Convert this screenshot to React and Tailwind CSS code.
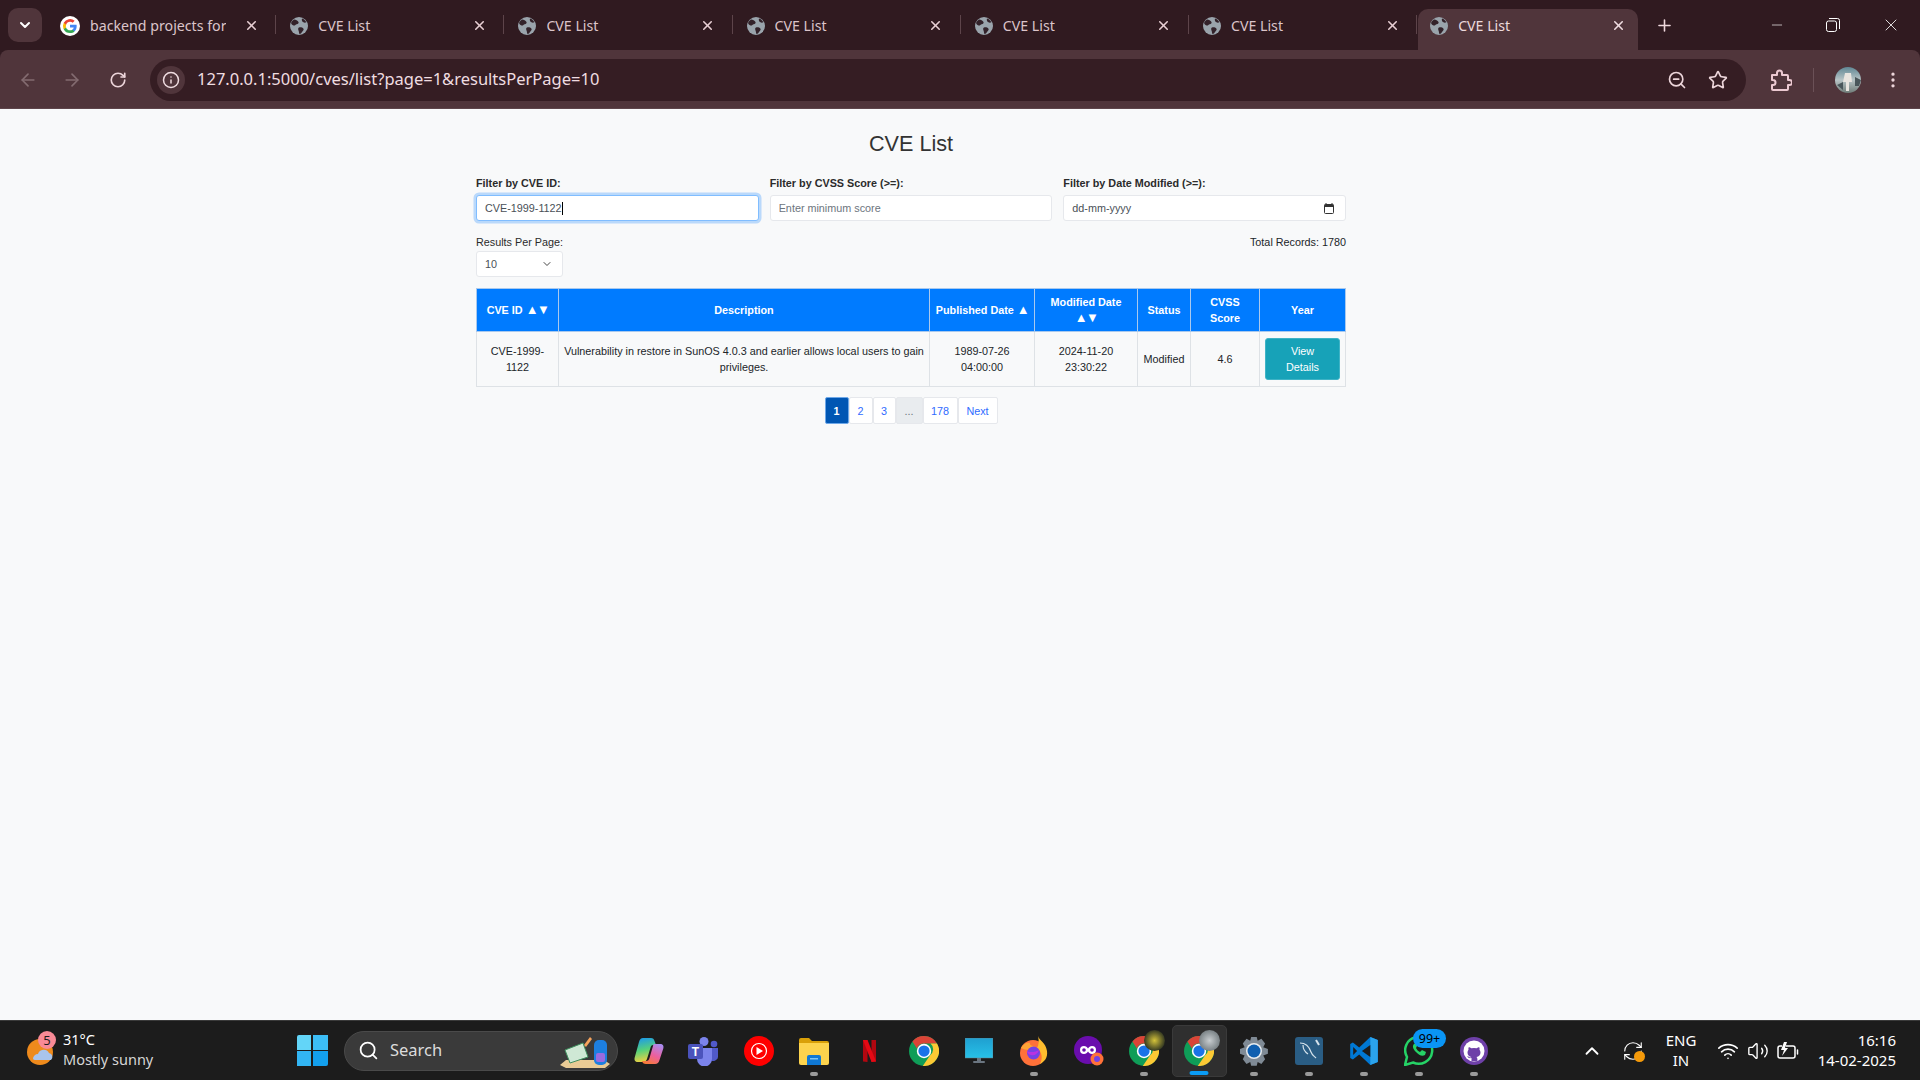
import { ArrowLeft, ArrowRight, RotateCw, Info, ZoomOut, Star, EllipsisVertical, Plus, X, Minus, ChevronDown, ChevronUp, Search, Wifi, Volume2, RefreshCw } from 'lucide-react';

function Globe() {
  return (
    <svg width="18" height="18" viewBox="0 0 18 18" className="shrink-0">
      <circle cx="9" cy="9" r="9" fill="#9aa4ac" />
      <path d="M4 2.500c2 .3 3.500 1 4.500 2.500.5 1-.5 2-1.800 2.200C5.500 7.500 5 9 3.500 8.500 2 8 1.500 7 1 6c.6-1.500 1.800-2.800 3-3.500zM9 10.500c1.500-.5 3.500 0 4.500 1.200.6 1-.5 2-1.300 3-.6 1-1.500 2-2.500 2.500-.8-1-.7-2.200-1-3.200-.5-1.500-1-3 .3-3.500zM12 1.500c2 .6 3.500 2 4.300 3.800-1 .6-2.300.4-3.300-.3-1-.6-1.500-2.200-1-3.500z" fill="#33222a" />
    </svg>
  );
}

function ChromeIcon({ size = 30 }) {
  return (
    <svg width={size} height={size} viewBox="0 0 48 48" className="shrink-0">
      <circle cx="24" cy="24" r="24" fill="#0f9d58" />
      <path d="M24 0a24 24 0 0 1 20.800 12H24a12 12 0 0 0-11.300 7.900L5.500 8.700A24 24 0 0 1 24 0z" fill="#db4437" />
      <path d="M44.800 12A24 24 0 0 1 22 47.900L33.500 31A12 12 0 0 0 34.400 12z" fill="#fcc934" />
      <circle cx="24" cy="24" r="11.500" fill="#fff" />
      <circle cx="24" cy="24" r="9" fill="#1a73e8" />
    </svg>
  );
}

function GoogleIcon() {
  return (
    <svg width="20" height="20" viewBox="0 0 48 48" className="shrink-0 -ml-[2px]">
      <circle cx="24" cy="24" r="24" fill="#fff" />
      <path d="M40 24.500c0-1.200-.1-2.300-.3-3.400H24v6.400h9a7.700 7.700 0 0 1-3.300 5v4.200h5.400c3.100-2.900 4.900-7.100 4.900-12.200z" fill="#4285f4" />
      <path d="M24 41c4.500 0 8.300-1.500 11.100-4.100l-5.400-4.200c-1.500 1-3.400 1.600-5.700 1.600-4.400 0-8.100-3-9.400-6.900H9v4.300A17 17 0 0 0 24 41z" fill="#34a853" />
      <path d="M14.600 27.400a10 10 0 0 1 0-6.700v-4.300H9a17 17 0 0 0 0 15.300z" fill="#fbbc05" />
      <path d="M24 13.700c2.500 0 4.700.9 6.400 2.500l4.800-4.800A17 17 0 0 0 9 16.400l5.600 4.300c1.300-4 5-7 9.400-7z" fill="#ea4335" />
    </svg>
  );
}

function Tab({ icon, title, narrow }) {
  return (
    <div className="w-[228.200px] h-[41px] flex items-center relative shrink-0 pl-[15px] pr-[16.500px] pb-[8px]">
      {icon}
      <span className={`ml-[10px] text-[14.200px] text-[#dcc5ca] whitespace-nowrap overflow-hidden ${narrow ? 'w-[136px] mr-auto' : 'flex-1'}`}>{title}</span>
      <X size={15} strokeWidth={2.5} className="text-[#e8cfd4]" />
      <div className="absolute -right-[1px] top-[6px] h-[19px] w-px bg-[#5d444a]" />
    </div>
  );
}

function Field({ label, children }) {
  return (
    <div className="flex-1">
      <div className="font-bold h-[16px] mb-[4px] text-[#2b2b2b]">{label}</div>
      {children}
    </div>
  );
}

function Arrows({ children }) {
  return <span className="text-[13px] leading-[0] tracking-[-1.500px]">{children}</span>;
}

const thClass = 'bg-[#007bff] border border-[#a9c9ee] font-bold text-white text-center align-middle px-[5px]';
const tdClass = 'border border-[#dee2e6] text-center align-middle px-[5px] text-[#212529]';

function PageBtn({ children, className }) {
  return (
    <div className={`h-[27px] flex items-center justify-center border rounded-[2px] ${className}`}>{children}</div>
  );
}

function Slot({ children, dot, active }) {
  return (
    <div className={`w-[55px] h-[52px] flex items-center justify-center relative rounded-[5px] shrink-0 ${active ? 'bg-[#2f2f2f] border border-[#3a3a3a]' : ''}`}>
      {children}
      {dot && <div className="absolute bottom-[1px] left-1/2 -translate-x-1/2 w-[8px] h-[4px] rounded-full bg-[#9a9a9a]" />}
      {active && <div className="absolute bottom-[1px] left-1/2 -translate-x-1/2 w-[19px] h-[4px] rounded-full bg-[#0a9cf5]" />}
    </div>
  );
}

export default function App() {
  return (
    <div className="w-[1920px] h-[1080px] flex flex-col bg-[#f8f9fa] overflow-hidden font-['Liberation_Sans',Arial,sans-serif]">
      {/* Browser chrome */}
      <div className="bg-[#301a20] shrink-0 font-['Noto_Sans',sans-serif]">
        <div className="h-[50px] flex items-end">
          <div className="self-start mt-[8px] ml-[8px] mr-[5px] w-[34px] h-[34px] rounded-[10px] bg-[#50353b] flex items-center justify-center text-white">
            <ChevronDown size={16} strokeWidth={3} />
          </div>
          <Tab icon={<GoogleIcon />} title="backend projects for" narrow />
          <Tab icon={<Globe />} title="CVE List" />
          <Tab icon={<Globe />} title="CVE List" />
          <Tab icon={<Globe />} title="CVE List" />
          <Tab icon={<Globe />} title="CVE List" />
          <Tab icon={<Globe />} title="CVE List" />
          <div className="w-[220px] h-[41px] ml-[2px] bg-[#50353b] rounded-t-[10px] flex items-center pl-[12px] pr-[12px] pb-[8px] shrink-0">
            <Globe />
            <span className="ml-[10px] text-[14.200px] text-[#ecdadd] flex-1">CVE List</span>
            <X size={15} strokeWidth={2.5} className="text-[#f0dde1]" />
          </div>
          <div className="h-[41px] flex items-center ml-[17px] pb-[8px] text-[#f0d9de]">
            <Plus size={19} strokeWidth={2} />
          </div>
          <div className="h-[50px] flex items-center ml-auto text-white">
            <div className="w-[46px] flex justify-center"><Minus size={16} strokeWidth={1} /></div>
            <div className="w-[66px] flex justify-center">
              <svg width="14" height="14" viewBox="0 0 14 14" fill="none" stroke="currentColor">
                <rect x="0.500" y="3" width="10" height="10.500" rx="2" />
                <path d="M3 .500h8.500a2 2 0 0 1 2 2V11" />
              </svg>
            </div>
            <div className="w-[54px] pr-[4px] flex justify-center"><X size={20} strokeWidth={1} /></div>
          </div>
        </div>

        <div className="h-[59px] bg-[#50353b] flex items-center pt-[1px] rounded-t-[8px] border-b border-[#5e454b]">
          <div className="w-[150px] flex items-center shrink-0 pl-[18px]">
            <ArrowLeft size={20} className="text-[#836b70]" />
            <ArrowRight size={20} className="ml-[24px] text-[#836b70]" />
            <RotateCw size={18} strokeWidth={2.2} className="ml-[27px] text-[#ecd5da]" />
          </div>
          <div className="w-[1596px] h-[42px] rounded-full bg-[#351d23] flex items-center pl-[7px] pr-[18px] shrink-0">
            <div className="w-[28px] h-[28px] rounded-full bg-[#50353b] flex items-center justify-center">
              <Info size={18} className="text-[#f0dde1]" />
            </div>
            <span className="ml-[12px] text-[16.500px] text-[#f0dde1] whitespace-nowrap">127.0.0.1:5000/cves/list?page=1&resultsPerPage=10</span>
            <div className="ml-auto flex items-center gap-[21px] text-[#ecd5da]">
              <ZoomOut size={20} />
              <Star size={20} />
            </div>
          </div>
          <div className="flex items-center text-[#ecc9d1] ml-[24px]">
            <svg width="22" height="22" viewBox="0 0 22 22" fill="none" stroke="currentColor" strokeWidth="2" strokeLinejoin="round">
              <path d="M2 6h5V4a2.500 2.500 0 0 1 5 0v2h5a1 1 0 0 1 1 1v4h1.500a2.500 2.500 0 0 1 0 5H18v4a1 1 0 0 1-1 1H3a1 1 0 0 1-1-1v-4h1a2.500 2.500 0 0 0 0-5H2z" />
            </svg>
            <div className="w-px h-[24px] bg-[#6b5157] ml-[21px] mr-[21px]" />
            <svg width="26" height="30" viewBox="0 0 26 30" className="shrink-0">
              <defs>
                <linearGradient id="avatar" x1="0" y1="0" x2="0" y2="1">
                  <stop offset="0" stopColor="#5f8794" />
                  <stop offset="0.500" stopColor="#b8c4c6" />
                  <stop offset="1" stopColor="#6f7c78" />
                </linearGradient>
              </defs>
              <ellipse cx="13" cy="15" rx="13" ry="13" fill="url(#avatar)" />
              <path d="M10 8h6l1 9h-3v9h-3v-9H8z" fill="#e8e4df" />
              <path d="M2 20l6-3v8zM20 12l6 3-2 6h-4z" fill="#49565a" />
            </svg>
            <EllipsisVertical size={20} className="ml-[22px] text-[#ecd5da]" />
          </div>
        </div>
      </div>

      {/* Page */}
      <main className="flex-1 ml-[476px] w-[870px] text-[10.800px] leading-[16px] text-[#212529]">
        <h1 className="text-[21.600px] leading-[26px] text-center text-[#333] mt-[22px] mb-[18px]">CVE List</h1>

        <div className="flex gap-[11px]">
          <Field label="Filter by CVE ID:">
            <div className="h-[26px] bg-white border border-[#80bdff] rounded-[3px] shadow-[0_0_0_2.500px_rgba(0,123,255,0.25)] flex items-center pl-[8px] text-[#495057]">
              CVE-1999-1122
              <span className="w-px h-[13px] bg-black" />
            </div>
          </Field>
          <Field label="Filter by CVSS Score (>=):">
            <input
              placeholder="Enter minimum score"
              className="w-full h-[26px] bg-white border border-[#e6e8ec] rounded-[3px] px-[8px] placeholder:text-[#6c757d] outline-none"
            />
          </Field>
          <Field label="Filter by Date Modified (>=):">
            <div className="h-[26px] bg-white border border-[#e6e8ec] rounded-[3px] flex items-center justify-between pl-[8px] pr-[11px] text-[#495057]">
              dd-mm-yyyy
              <svg width="10" height="11" viewBox="0 0 10 11">
                <path d="M2 0v1.500M8 0v1.500" stroke="#333" />
                <rect x="0.500" y="1.500" width="9" height="9" rx="1" fill="none" stroke="#333" />
                <rect x="0.500" y="1.500" width="9" height="2.500" fill="#333" />
              </svg>
            </div>
          </Field>
        </div>

        <div className="flex justify-between mt-[13px]">
          <div>
            <div className="h-[16px] mb-[1px] text-[#2b2b2b]">Results Per Page:</div>
            <div className="w-[87px] h-[26px] bg-white border border-[#e6e8ec] rounded-[3px] flex items-center justify-between pl-[8px] pr-[9px] text-[#495057]">
              10
              <ChevronDown size={12} strokeWidth={2} className="text-[#444]" />
            </div>
          </div>
          <div>Total Records: 1780</div>
        </div>

        <table className="w-[870px] table-fixed border-collapse mt-[11px]">
          <thead>
            <tr className="h-[43px]">
              <th className={`${thClass} w-[82px]`}>CVE ID <Arrows>▲▼</Arrows></th>
              <th className={`${thClass} w-[371px]`}>Description</th>
              <th className={`${thClass} w-[105px] !px-[2px]`}>Published Date <Arrows>▲</Arrows></th>
              <th className={`${thClass} w-[103px]`}>Modified Date <Arrows>▲▼</Arrows></th>
              <th className={`${thClass} w-[53px]`}>Status</th>
              <th className={`${thClass} w-[69px]`}>CVSS Score</th>
              <th className={thClass}>Year</th>
            </tr>
          </thead>
          <tbody>
            <tr className="h-[55px]">
              <td className={tdClass}>CVE-1999-1122</td>
              <td className={tdClass}>Vulnerability in restore in SunOS 4.0.3 and earlier allows local users to gain privileges.</td>
              <td className={tdClass}>1989-07-26 04:00:00</td>
              <td className={tdClass}>2024-11-20 23:30:22</td>
              <td className={`${tdClass} !px-0`}>Modified</td>
              <td className={tdClass}>4.6</td>
              <td className={tdClass}>
                <div className="h-[42px] rounded-[3px] bg-[#17a2b8] border border-[#3fb3c6] text-white flex items-center justify-center text-center px-[14px]">View Details</div>
              </td>
            </tr>
          </tbody>
        </table>

        <div className="flex justify-center mt-[10px] text-[#2f6bff]">
          <PageBtn className="w-[24px] bg-[#0056b3] border-[#6ea8e8] text-white font-bold">1</PageBtn>
          <PageBtn className="w-[24px] bg-white border-[#e6e8ec]">2</PageBtn>
          <PageBtn className="w-[23px] bg-white border-[#e6e8ec]">3</PageBtn>
          <PageBtn className="w-[27px] bg-[#e9ecef] border-[#e6e8ec] text-[#6c757d]">...</PageBtn>
          <PageBtn className="w-[35px] bg-white border-[#e6e8ec]">178</PageBtn>
          <PageBtn className="w-[40px] bg-white border-[#e6e8ec]">Next</PageBtn>
        </div>
      </main>

      {/* Windows taskbar */}
      <div className="h-[60px] bg-[#1c1c1c] border-t border-[#3a3a3a] flex items-center shrink-0 font-['Noto_Sans',sans-serif] text-white">
        <div className="w-[284px] flex items-center shrink-0 pl-[27px]">
          <div className="relative w-[30px] h-[34px] shrink-0">
            <svg width="30" height="34" viewBox="0 0 30 34">
              <circle cx="13" cy="18" r="13" fill="#ee8a1c" />
              <path d="M6 25a5 5 0 0 1 5-5 6 6 0 0 1 11-1 4 4 0 0 1 2 7H8a3 3 0 0 1-2-1z" fill="#a9c4ec" />
            </svg>
            <div className="absolute left-[11px] -top-[3px] w-[18px] h-[18px] rounded-full bg-[#f98a96] text-[#1c1c1c] text-[13px] leading-[18px] text-center">5</div>
          </div>
          <div className="ml-[6px] -mt-[3px] text-[14.500px] leading-[20px] whitespace-nowrap">
            <div>31°C</div>
            <div className="text-[#d6d6d6]">Mostly sunny</div>
          </div>
        </div>

        <div className="w-[55px] pl-[1px] flex justify-center shrink-0">
          <div className="grid grid-cols-2 gap-[1.500px] w-[31px] h-[31px]">
            <div className="bg-[#63d5f8] rounded-tl-[2px]" />
            <div className="bg-[#3cbdf5]" />
            <div className="bg-[#32b5f3]" />
            <div className="bg-[#13a0ee] rounded-br-[2px]" />
          </div>
        </div>

        <div className="w-[274px] ml-[5px] h-[40px] rounded-full bg-[#3a3a3a] border border-[#4a4a4a] flex items-center pl-[13px] relative shrink-0">
          <Search size={21} strokeWidth={2} className="text-white" />
          <span className="ml-[11px] text-[16.500px] text-[#dcdcdc]">Search</span>
          <svg width="50" height="36" viewBox="0 0 50 36" className="absolute right-[7px] top-[1px]">
            <path d="M0 32l6-5h38l6 4-5 4H6z" fill="#e9cb95" />
            <path d="M5 17l18-7 5 14-18 6z" fill="#cfe8d5" stroke="#3f8f5e" />
            <path d="M24 12l6-8 2 2-6 8z" fill="#f6a35c" />
            <rect x="34" y="7" width="13" height="25" rx="5" fill="#1d7fe0" />
            <rect x="36" y="20" width="9" height="9" rx="2" fill="#9a6be0" />
          </svg>
        </div>

        <div className="flex items-center ml-[3.500px]">
          <Slot>
            <svg width="30" height="28" viewBox="0 0 30 28">
              <defs>
                <linearGradient id="cp1" x1="0.300" y1="0" x2="0.500" y2="1">
                  <stop offset="0" stopColor="#1d9be8" />
                  <stop offset="0.500" stopColor="#56d17a" />
                  <stop offset="1" stopColor="#f4d03f" />
                </linearGradient>
                <linearGradient id="cp2" x1="0.800" y1="0" x2="0.300" y2="1">
                  <stop offset="0" stopColor="#a98cf0" />
                  <stop offset="0.550" stopColor="#ec5f9e" />
                  <stop offset="1" stopColor="#f77a3a" />
                </linearGradient>
              </defs>
              <path d="M9 1h8c2 0 3 1 3.500 3L22 8h-3c-1 0-2 .7-2.300 2L13 22c-.6 2-2 3-4 3H4c-3 0-4-2-3.300-4.500L5 5c.7-2.500 2-4 4-4z" fill="url(#cp1)" />
              <path d="M20 7h6c3 0 4 2 3.300 4.500L25.500 23c-.7 2.500-2 4-4.500 4h-9c-2.500 0-3.500-1-4-3h4c2 0 3-1 3.500-3L19 9c.2-1 .5-2 1-2z" fill="url(#cp2)" />
            </svg>
          </Slot>
          <Slot>
            <svg width="32" height="30" viewBox="0 0 32 30">
              <circle cx="16" cy="5.500" r="4.500" fill="#7b83eb" />
              <circle cx="26" cy="8" r="3.300" fill="#5059c9" />
              <path d="M22 12h8v9a5 5 0 0 1-8 3z" fill="#5059c9" />
              <path d="M9 12h15v11a7.500 7.500 0 0 1-15 0z" fill="#7b83eb" />
              <rect x="0" y="8" width="15" height="15" rx="2" fill="#4b53bc" />
              <text x="7.500" y="20" textAnchor="middle" fontSize="12" fontWeight="700" fill="#fff" fontFamily="Liberation Sans">T</text>
            </svg>
          </Slot>
          <Slot>
            <svg width="30" height="30" viewBox="0 0 30 30">
              <circle cx="15" cy="15" r="15" fill="#ff0000" />
              <circle cx="15" cy="15" r="7.500" fill="none" stroke="#fff" strokeWidth="1.200" />
              <path d="M12.500 11l6.500 4-6.500 4z" fill="#fff" />
            </svg>
          </Slot>
          <Slot dot>
            <svg width="30" height="28" viewBox="0 0 30 28">
              <path d="M0 3a2 2 0 0 1 2-2h8l3 3h15a2 2 0 0 1 2 2v4H0z" fill="#d9a008" />
              <path d="M0 6h30v20a2 2 0 0 1-2 2H2a2 2 0 0 1-2-2z" fill="#fcd34d" />
              <path d="M8 20a2 2 0 0 1 2-2h10a2 2 0 0 1 2 2v8H8z" fill="#0f78d4" />
              <rect x="11" y="21" width="8" height="1.500" fill="#7cc4f5" />
            </svg>
          </Slot>
          <Slot>
            <svg width="13" height="22" viewBox="0 0 13 22">
              <path d="M0 0h4.500v22L0 21.500z" fill="#b20710" />
              <path d="M8.500 0H13v21.500L8.500 22z" fill="#b20710" />
              <path d="M0 0h4.500l8.500 21.500L8.500 22z" fill="#e50914" />
            </svg>
          </Slot>
          <Slot><ChromeIcon /></Slot>
          <Slot>
            <svg width="28" height="26" viewBox="0 0 28 26">
              <defs>
                <linearGradient id="mon" x1="0" y1="0" x2="0" y2="1">
                  <stop offset="0" stopColor="#1f9fd0" />
                  <stop offset="1" stopColor="#27c1e8" />
                </linearGradient>
              </defs>
              <rect x="0" y="0" width="28" height="20" fill="url(#mon)" stroke="#6d7c84" strokeWidth="0.500" />
              <rect x="12" y="20" width="4" height="3" fill="#6a7580" />
              <rect x="8" y="23" width="12" height="2" rx="1" fill="#6a7580" />
            </svg>
          </Slot>
          <Slot dot>
            <svg width="30" height="30" viewBox="0 0 30 30">
              <circle cx="14" cy="17" r="13" fill="#ff7139" />
              <path d="M19 0c1 4 8 7 9 15 1 7-3 11-7 13 3-6 2-12-3-16 2-3 2-8 1-12z" fill="#ffbd2e" />
              <path d="M2 12c2-4 6-6 9-5-1 2 3 3 5 4-3 0-2 3-5 3-4 0-7-1-9-2z" fill="#ffa436" />
              <circle cx="14.500" cy="17" r="6.500" fill="#7542e5" />
              <path d="M8 15c3 2 9 1 12-1-1 4-5 6-8 5-2-.6-4-2-4-4z" fill="#b833e1" />
            </svg>
          </Slot>
          <Slot>
            <svg width="30" height="30" viewBox="0 0 30 30">
              <circle cx="14" cy="14" r="14" fill="#6a0dad" />
              <path d="M10 10a4 4 0 1 0 0 8c2 0 3-1 4-2.500 1 1.500 2 2.500 4 2.500a4 4 0 1 0 0-8c-2 0-3 1-4 2.500C13 11 12 10 10 10z" fill="#fff" />
              <circle cx="10" cy="14" r="1.800" fill="#6a0dad" />
              <circle cx="18" cy="14" r="1.800" fill="#6a0dad" />
              <circle cx="23" cy="23" r="6.500" fill="#ff7139" />
              <circle cx="23" cy="23" r="3" fill="#7542e5" />
            </svg>
          </Slot>
          <Slot dot>
            <div className="relative w-[30px] h-[30px]">
              <ChromeIcon />
              <div className="absolute -right-[6px] -top-[6px] w-[21px] h-[21px] rounded-full bg-[radial-gradient(circle,#d4c33a,#2a3020_75%)]" />
            </div>
          </Slot>
          <Slot active>
            <div className="relative w-[30px] h-[30px]">
              <ChromeIcon />
              <div className="absolute -right-[6px] -top-[6px] w-[21px] h-[21px] rounded-full bg-[radial-gradient(circle,#c8cdd0,#6f787c_80%)]" />
            </div>
          </Slot>
          <Slot dot>
            <svg width="30" height="30" viewBox="0 0 30 30">
              <path d="M12 0h6l1 4 4-2 4 5-2 4 5 2v5l-5 2 2 4-4 5-4-2-1 4h-6l-1-4-4 2-4-5 2-4-5-2v-5l5-2-2-4 4-5 4 2z" fill="#7f8a95" transform="translate(1 1) scale(0.93)" />
              <circle cx="15" cy="15" r="8" fill="#e8ecef" />
              <circle cx="15" cy="15" r="6.500" fill="#0f5fb0" />
            </svg>
          </Slot>
          <Slot dot>
            <svg width="28" height="28" viewBox="0 0 28 28">
              <rect width="28" height="28" rx="3" fill="#2a5d84" />
              <path d="M5 6c5 0 9 3 11 9 1 3 3 4 5 6M8 8c0 4 2 7 5 9" fill="none" stroke="#d5e3ec" strokeWidth="1.200" />
              <path d="M21 3l3 5" stroke="#d5e3ec" strokeWidth="2" />
            </svg>
          </Slot>
          <Slot dot>
            <svg width="30" height="30" viewBox="0 0 100 100">
              <path d="M71 3 34 38 13 22 4 27v46l9 5 21-16 37 35 25-10V13z" fill="#0078d4" />
              <path d="M71 3l25 10v74l-25 10z" fill="#2ba3ec" />
              <path d="M71 30 43 50l28 20z" fill="#1c1c1c" />
              <path d="M14 37v26l13-13z" fill="#1c1c1c" />
            </svg>
          </Slot>
          <Slot dot>
            <div className="relative">
              <svg width="30" height="30" viewBox="0 0 30 30">
                <path d="M1 29l2-8A13.500 13.500 0 1 1 9 26.500z" fill="none" stroke="#25d366" strokeWidth="2.500" />
                <path d="M10 8c-2 2-1 5 2 8s6 5 9 3l1-3-4-2-2 2c-2-1-3-2-4-4l1-2-1-3z" fill="#25d366" />
              </svg>
              <div className="absolute -right-[12px] -top-[7px] w-[33px] h-[19px] rounded-full bg-[#0a95f5] text-black text-[12.500px] leading-[19px] text-center">99+</div>
            </div>
          </Slot>
          <Slot dot>
            <svg width="28" height="28" viewBox="0 0 28 28">
              <circle cx="14" cy="14" r="14" fill="#6e40a8" />
              <circle cx="14" cy="14" r="10.500" fill="#fff" />
              <path d="M11.500 24v-3c-3 .6-3.800-1-4.200-2 1 .2 1.800 1.500 3 1.500l1.200-.5c-2.500-.4-4-2-4-4.500 0-1 .4-2 1-2.700-.2-.8-.2-1.800.2-2.600 1 0 2 .6 2.700 1.100a9 9 0 0 1 5.200 0c.7-.5 1.700-1.100 2.700-1.100.4.800.4 1.800.2 2.600.6.700 1 1.700 1 2.700 0 2.500-1.500 4.100-4 4.500.6.500.9 1.200.9 2.200V24z" fill="#6e40a8" />
            </svg>
          </Slot>
        </div>

        <div className="ml-auto flex items-center pr-[24px]">
          <ChevronUp size={22} strokeWidth={2} className="mr-[19px]" />
          <div className="relative mr-[18px]">
            <RefreshCw size={22} strokeWidth={1.200} />
            <div className="absolute -right-[1px] bottom-0 w-[11px] h-[11px] rounded-full bg-[#f59a0a]" />
          </div>
          <div className="w-[38px] -mt-[2px] text-[15px] leading-[20px] text-center mr-[17px]">
            <div>ENG</div>
            <div>IN</div>
          </div>
          <Wifi size={22} strokeWidth={1.800} className="mr-[8px]" />
          <Volume2 size={22} strokeWidth={1.500} className="mr-[8px]" />
          <svg width="22" height="22" viewBox="0 0 22 22" fill="none" stroke="currentColor" strokeWidth="1.500" className="mr-[13px]">
            <path d="M5 6H3a2 2 0 0 0-2 2v8a2 2 0 0 0 2 2h13a2 2 0 0 0 2-2V8a2 2 0 0 0-2-2H9" />
            <path d="M20.500 10v4" strokeLinecap="round" />
            <path d="M7 2L4 10h3l-2 6 6-8H8l2-6z" fill="currentColor" stroke="none" />
          </svg>
          <div className="w-[84px] -mt-[2px] text-[15px] leading-[20px] text-right whitespace-nowrap">
            <div>16:16</div>
            <div>14-02-2025</div>
          </div>
        </div>
      </div>
    </div>
  );
}
